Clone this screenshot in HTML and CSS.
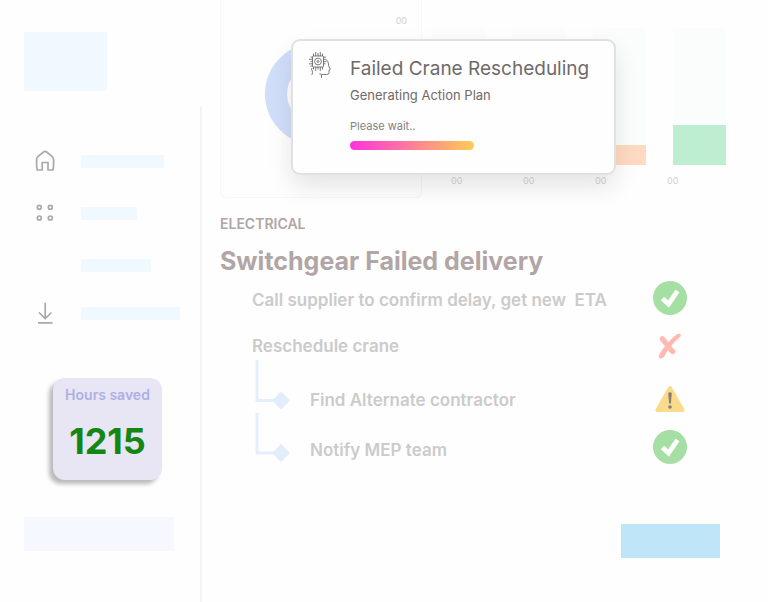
FILE: index.html
```html
<!DOCTYPE html>
<html lang="en">
<head>
  <meta charset="UTF-8">
  <meta name="viewport" content="width=device-width, initial-scale=1.0">
  <title>Switchgear Failed delivery</title>
  <link rel="stylesheet" href="styles.css">
</head>
<body>
  <aside class="sidebar">
    <div class="logo-area">
      <div class="logo"></div>
    </div>
    <div class="sidebar-body">
      <nav class="nav">
        <a class="nav-link" href="#" aria-label="Home">
          <svg class="nav-icon" viewBox="0 0 24 24">
            <path d="M10.5 3 L5.2 7.3 Q3.6 8.7 3.6 10.8 V15 Q3.6 18.5 4.2 21 H9.2 V13.5 H15 V21 H20 Q20.6 18.5 20.6 15 V10.8 Q20.6 8.7 19 7.3 L13.7 3 Q12.1 1.8 10.5 3 Z"/>
          </svg>
          <span class="bar bar-home"></span>
        </a>
        <a class="nav-link" href="#" aria-label="Apps">
          <svg class="nav-icon" viewBox="0 0 24 24">
            <circle cx="6.3" cy="6.3" r="2"/>
            <circle cx="17.3" cy="6.3" r="2"/>
            <circle cx="6.3" cy="17" r="2"/>
            <circle cx="17.3" cy="17" r="2"/>
          </svg>
          <span class="bar bar-apps"></span>
        </a>
        <a class="nav-link" href="#" aria-label="Reports">
          <span class="nav-icon"></span>
          <span class="bar bar-reports"></span>
        </a>
      </nav>
      <nav class="nav nav-bottom">
        <a class="nav-link" href="#" aria-label="Downloads">
          <svg class="nav-icon" viewBox="0 0 24 24">
            <path d="M12.2 1.8 V17.3 M6 11.5 L12.2 17.5 L18.4 11.5 M5 21.8 H19.5"/>
          </svg>
          <span class="bar bar-downloads"></span>
        </a>
      </nav>
      <div class="stat-card">
        <div class="stat-label">Hours saved</div>
        <div class="stat-value">1215</div>
      </div>
      <div class="profile"></div>
    </div>
  </aside>

  <main>
    <div class="charts">
      <div class="donut-card">
        <div class="donut-value">00</div>
        <div class="donut"></div>
      </div>
      <div class="bar-chart">
        <div class="columns">
          <div class="column"></div>
          <div class="column"></div>
          <div class="column"><div class="fill orange"></div></div>
          <div class="column"><div class="fill green"></div></div>
        </div>
        <div class="column-labels">
          <span>00</span>
          <span>00</span>
          <span>00</span>
          <span>00</span>
        </div>
      </div>

      <section class="dialog" role="dialog" aria-labelledby="dialogTitle">
        <svg class="dialog-icon" viewBox="0 0 24 28">
          <!-- chip -->
          <rect x="4.5" y="5" width="11" height="11" rx="1"/>
          <circle cx="10" cy="10.5" r="3.4"/>
          <circle cx="10" cy="10.5" r="1"/>
          <path d="M5.5 5 V2.5 M7.7 5 V1 M10 5 V2 M12.3 5 V1 M14.5 5 V2.5"/>
          <path d="M5.5 16 V18.5 M7.7 16 V20 M10 16 V18.5 M12.3 16 V20 M14.5 16 V18.5"/>
          <path d="M4.5 6.2 H2.5 M4.5 8.4 H1 M4.5 10.6 H2.5 M4.5 12.8 H1 M4.5 15 H2.5"/>
          <path d="M15.5 6.2 H18 M15.5 8.4 H17.5 M15.5 10.6 H18.5 M15.5 12.8 H17.5"/>
          <!-- head -->
          <path d="M17.5 8 Q20.5 10 20.5 13 Q20.3 14.5 21 15.7 L22.3 18.2 Q22.4 19 21 19.2 V21.8 Q21 23.5 18.5 23.5 H15.8 Q13.5 23.5 11.3 22.8 M13.5 23.5 V27"/>
          <path d="M4 17 Q3 18.3 4.3 20 Q5 21.5 3.8 24"/>
        </svg>
        <div class="dialog-text">
          <h2 id="dialogTitle">Failed Crane Rescheduling</h2>
          <p class="dialog-subtitle">Generating Action Plan</p>
          <label for="planProgress">Please wait..</label>
          <progress id="planProgress" value="100" max="100"></progress>
        </div>
      </section>
    </div>

    <section class="delivery">
      <div class="category">ELECTRICAL</div>
      <h1>Switchgear Failed delivery</h1>
      <ul class="tasks">
        <li class="task">
          <span class="task-name">Call supplier to confirm delay, get new &nbsp;ETA</span>
          <svg class="status" viewBox="0 0 34 34">
            <circle class="done" cx="17" cy="15" r="17"/>
            <path class="tick" d="M9.5 15.5 L15.5 21 L24.5 8"/>
          </svg>
        </li>
        <li class="task">
          <span class="task-name">Reschedule crane</span>
          <svg class="status" viewBox="0 0 34 34">
            <path class="cross" d="M6.8 9.2 Q8.2 5.5 11.2 8 Q12.8 9.8 15.3 13.3 Q20 7.5 24.5 5 Q27.5 4 28 6.2 Q27.8 7.6 25.8 9 Q21.5 12.2 18.2 17.2 Q20.3 19.8 22.5 21.3 Q23.2 23.5 21 24.8 Q19 26 17.5 24 L14.8 21 Q12.8 24.5 11 28 Q8.8 30.5 6.2 28.8 Q4.8 27.5 6.5 25 Q9 21 12 17.3 Q9.2 14.2 7 11.3 Q6.4 10.2 6.8 9.2 Z"/>
          </svg>
        </li>
        <li>
          <ul class="subtasks">
            <li class="task subtask">
              <svg class="connector" viewBox="0 0 36 50">
                <path class="line" d="M2 -15 V25.5 H20"/>
                <path class="diamond" d="M26 16.5 L35 25.5 L26 34.5 L17 25.5 Z"/>
              </svg>
              <span class="task-name">Find Alternate contractor</span>
              <svg class="status" viewBox="0 0 34 34">
                <path class="warning" d="M17 5 L29.5 27 H4.5 Z"/>
                <path class="mark" d="M15.2 10 Q17 8.6 18.8 10 L17.9 20.5 H16.1 Z"/>
                <circle class="mark" cx="17" cy="24" r="1.8"/>
              </svg>
            </li>
            <li class="task subtask">
              <svg class="connector" viewBox="0 0 36 50">
                <path class="line" d="M2 -12 V28 H20"/>
                <path class="diamond" d="M26 19 L35 28 L26 37 L17 28 Z"/>
              </svg>
              <span class="task-name">Notify MEP team</span>
              <svg class="status" viewBox="0 0 34 34">
                <circle class="done" cx="17" cy="14" r="17"/>
                <path class="tick" d="M9.5 14.5 L15.5 20 L24.5 7"/>
              </svg>
            </li>
          </ul>
        </li>
      </ul>
      <button class="action" type="button" aria-label="Continue"></button>
    </section>
  </main>
</body>
</html>
```

FILE: styles.css
```css
* {
  box-sizing: border-box;
}

body {
  font-family: Inter, "Liberation Sans", sans-serif;
  margin: 0;
  display: grid;
  grid-template-columns: 202px 1fr;
  min-height: 100vh;
  background-color: #fefefe;
}

/* sidebar */
.sidebar {
  display: flex;
  flex-direction: column;
}

.logo-area {
  height: 107px;
  padding: 32px 24px 0;
}

.logo {
  width: 83px;
  height: 59px;
  background-color: #f0f9ff;
}

.sidebar-body {
  flex: 1;
  padding: 42px 0 0 24px;
  border-right: 2px solid #f4f4f4;
}

.nav {
  display: flex;
  flex-direction: column;
  gap: 28px;
  padding-left: 9px;
}

.nav-bottom {
  margin-top: 24px;
}

.nav-link {
  display: flex;
  align-items: center;
  gap: 24px;
  height: 24px;
}

.nav-icon {
  width: 24px;
  height: 24px;
  fill: none;
  stroke: #a9a9a9;
  stroke-width: 1.7;
}

.bar {
  height: 13px;
  background-color: #f0f9ff;
}

.bar-home {
  width: 83px;
}

.bar-apps {
  width: 56px;
}

.bar-reports {
  width: 70px;
}

.bar-downloads {
  width: 99px;
}

.stat-card {
  width: 109px;
  height: 102px;
  margin: 53px 0 0 29px;
  padding-top: 7px;
  border-radius: 12px;
  background-color: #e8e5f5;
  box-shadow: -4px 4px 4px rgba(0, 0, 0, 0.27);
  text-align: center;
}

.stat-label {
  font-size: 14px;
  line-height: 20px;
  font-weight: 600;
  color: #adb0e2;
}

.stat-value {
  margin-top: 14px;
  font-size: 36px;
  line-height: 44px;
  font-weight: 700;
  color: #138613;
}

.profile {
  width: 150px;
  height: 34px;
  margin-top: 37px;
  background-color: #f5f9ff;
}

/* charts */
main {
  padding: 0 42px 44px 18px;
}

.charts {
  position: relative;
  display: flex;
  gap: 10px;
  height: 198px;
}

.donut-card {
  width: 202px;
  padding: 14px 14px 0;
  border: 1px solid #f7f7f7;
  border-top: 0;
  border-radius: 0 0 6px 6px;
}

.donut-value {
  font-size: 9px;
  line-height: 14px;
  text-align: right;
  color: #d2d2d2;
}

.donut {
  width: 102px;
  height: 102px;
  margin: 15px 0 0 30px;
  border: 22px solid #d1defa;
  border-radius: 50%;
}

.bar-chart {
  flex: 1;
  padding-top: 28px;
}

.columns {
  display: flex;
  justify-content: space-between;
  height: 137px;
}

.column {
  display: flex;
  align-items: flex-end;
  width: 53px;
  background-color: #fbfdfd;
}

.fill {
  width: 100%;
}

.orange {
  height: 20px;
  background-color: #ffdac2;
}

.green {
  height: 40px;
  background-color: #bdeed1;
}

.column-labels {
  display: flex;
  gap: 60px;
  padding: 9px 0 0 19px;
  font-size: 9px;
  line-height: 14px;
  color: #d2d2d2;
}

.column-labels span {
  width: 12px;
}

/* dialog */
.dialog {
  position: absolute;
  top: 39px;
  left: 71px;
  display: flex;
  gap: 18px;
  width: 325px;
  height: 136px;
  padding: 10px 15px;
  border: 2px solid #e0e2e2;
  border-radius: 9px;
  background-color: #fefefe;
  box-shadow: 0 12px 24px rgba(0, 0, 0, 0.1);
}

.dialog-icon {
  flex: none;
  width: 24px;
  height: 28px;
  fill: none;
  stroke: #5c5c5c;
  stroke-width: 0.8;
}

.dialog h2 {
  margin: 5px 0 0;
  font-size: 19px;
  line-height: 26px;
  font-weight: 400;
  white-space: nowrap;
  color: #6f6a6a;
}

.dialog-subtitle {
  margin: 3px 0 0;
  font-size: 13px;
  line-height: 20px;
  color: #6f6a6a;
}

.dialog label {
  display: block;
  margin-top: 13px;
  font-size: 11px;
  line-height: 16px;
  color: #858080;
}

.dialog progress {
  display: block;
  width: 124px;
  height: 9px;
  margin-top: 7px;
  appearance: none;
  border: 0;
}

.dialog progress::-webkit-progress-bar {
  background-color: transparent;
}

.dialog progress::-webkit-progress-value {
  border-radius: 5px;
  background: linear-gradient(to right, #ff33dd, #ffcc52);
}

/* delivery */
.delivery {
  display: flex;
  flex-direction: column;
}

.category {
  margin-top: 16px;
  font-size: 14px;
  line-height: 20px;
  font-weight: 600;
  color: #b1a5a5;
}

h1 {
  margin: 11px 0 0;
  font-size: 25px;
  line-height: 32px;
  font-weight: 700;
  color: #b1a5a5;
}

.tasks,
.subtasks {
  list-style: none;
  margin: 0;
  padding: 0;
}

.tasks {
  padding: 0 39px 0 32px;
}

.subtasks {
  padding-top: 6px;
}

.task {
  display: flex;
  align-items: center;
  height: 46px;
  font-size: 17px;
  line-height: 24px;
  font-weight: 600;
  color: #cbcbcb;
}

.task-name {
  flex: 1;
}

.subtask {
  height: 50px;
}

.connector {
  width: 36px;
  height: 50px;
  margin: 0 19px 0 3px;
  overflow: visible;
}

.line {
  fill: none;
  stroke: #e5eefb;
  stroke-width: 3;
}

.diamond {
  fill: #e2ecfb;
}

.status {
  width: 34px;
  height: 34px;
  overflow: visible;
}

.done {
  fill: #a6dfa3;
}

.tick {
  fill: none;
  stroke: #fff;
  stroke-width: 4.8;
}

.cross {
  fill: #ffb9b0;
}

.warning {
  fill: #fadb8c;
  stroke: #fadb8c;
  stroke-width: 4;
  stroke-linejoin: round;
}

.mark {
  fill: #857f78;
}

.action {
  align-self: flex-end;
  width: 99px;
  height: 34px;
  margin: 49px 6px 0 0;
  border: 0;
  background-color: #bfe5f8;
}
```
